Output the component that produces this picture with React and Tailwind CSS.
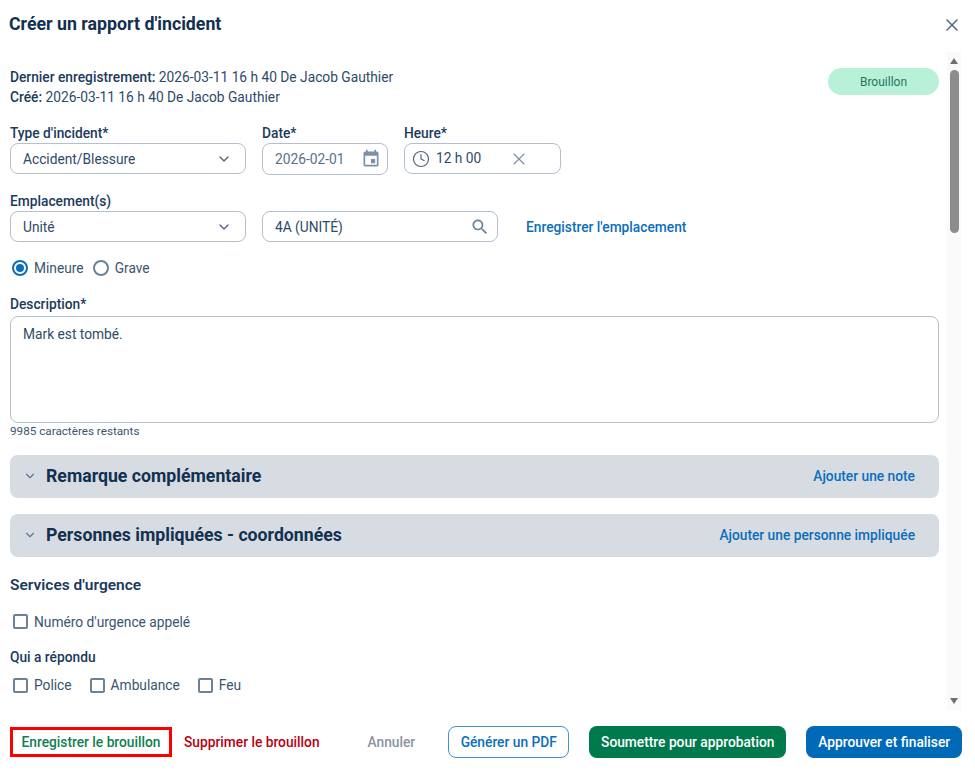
import { ChevronDown, X, Clock } from 'lucide-react';

const navy = 'text-[#12304f]';

const Label = ({ children, className = '' }) => (
  <div className={`text-[13.75px] leading-[20px] font-medium text-[#1b3a5c] ${className}`}>{children}</div>
);

const Box = ({ className = '', children }) => (
  <div className={`flex items-center rounded-[8px] border border-[#b3bfce] bg-white text-[13.75px] text-[#2f4a68] ${className}`}>
    {children}
  </div>
);

const SelectBox = ({ value }) => (
  <Box className="w-[236px] h-[31px] pl-[12px] pr-[13px] justify-between">
    <span className="pt-[1px]">{value}</span>
    <ChevronDown size={16} strokeWidth={2} className="text-[#4f6680]" />
  </Box>
);

const Check = ({ label }) => (
  <label className="flex items-center gap-[6px] text-[13.75px] text-[#3a5470]">
    <span className="w-[15px] h-[15px] ml-[3px] rounded-[2px] border-2 border-[#6d8199] bg-white" />
    {label}
  </label>
);

const Radio = ({ label, checked }) => (
  <label className="flex items-center gap-[6px] text-[13.75px] text-[#3a5470]">
    <span className={`w-[16px] h-[16px] rounded-full border-2 flex items-center justify-center ${checked ? 'border-[#0a6ebd]' : 'border-[#6d8199]'}`}>
      {checked && <span className="w-[8px] h-[8px] rounded-full bg-[#0a6ebd]" />}
    </span>
    {label}
  </label>
);

const Section = ({ title, action }) => (
  <div className="h-[43px] rounded-[8px] bg-[#d7dce3] flex items-center justify-between pl-[13px] pr-[24px]">
    <div className="flex items-center gap-[9px]">
      <ChevronDown size={14} strokeWidth={2} className="text-[#5f7690]" />
      <span className={`text-[17.7px] font-bold ${navy}`}>{title}</span>
    </div>
    <span className="text-[13.75px] font-medium text-[#0a6ebd]">{action}</span>
  </div>
);

const App = () => {
  return (
    <div className="w-[975px] h-[771px] bg-white flex flex-col overflow-hidden font-['Roboto',sans-serif]">
      {/* Header */}
      <div className="h-[52px] shrink-0 flex items-start justify-between pl-[9px] pr-[13px] pt-[12px]">
        <h1 className={`text-[17.75px] leading-[24px] font-bold ${navy}`}>Créer un rapport d'incident</h1>
        <X size={20} strokeWidth={1.8} className="text-[#4f6680] mt-[3px]" />
      </div>

      {/* Body */}
      <div className="h-[658px] shrink-0 flex">
        <div className="w-[939px] pl-[10px] shrink-0">
          <div className="flex justify-between pt-[15px] h-[71px]">
            <div className="text-[13.75px] leading-[20px] text-[#2f4a68]">
              <div><span className="font-medium text-[#1b3a5c]">Dernier enregistrement:</span> 2026-03-11 16 h 40 De Jacob Gauthier</div>
              <div><span className="font-medium text-[#1b3a5c]">Créé:</span> 2026-03-11 16 h 40 De Jacob Gauthier</div>
            </div>
            <div className="mt-[1px] w-[111px] h-[27px] rounded-full bg-[#b8f0d8] text-[#24775a] text-[12px] flex items-center justify-center">Brouillon</div>
          </div>

          <div className="flex gap-[16px]">
            <div>
              <Label>Type d'incident*</Label>
              <SelectBox value="Accident/Blessure" />
            </div>
            <div>
              <Label>Date*</Label>
              <Box className="w-[126px] h-[32px] pl-[12px] pr-[6px] justify-between text-[#5b7088]">
                <span className="pt-[1px]">2026-02-01</span>
                <svg width="20" height="20" viewBox="0 0 24 24" fill="#7d90a6">
                  <path d="M17 12h-5v5h5v-5zM16 1v2H8V1H6v2H5c-1.11 0-1.99.9-1.99 2L3 19c0 1.1.89 2 2 2h14c1.1 0 2-.9 2-2V5c0-1.1-.9-2-2-2h-1V1h-2zm3 18H5V8h14v11z" />
                </svg>
              </Box>
            </div>
            <div>
              <Label>Heure*</Label>
              <Box className="w-[157px] h-[31px] pl-[7px]">
                <Clock size={18} strokeWidth={1.6} className="text-[#4f6680] mr-[6px]" />
                <span>12 h 00</span>
                <X size={20} strokeWidth={1.4} className="text-[#7d90a6] ml-[28px]" />
              </Box>
            </div>
          </div>

          <Label className="mt-[16px]">Emplacement(s)</Label>
          <div className="flex items-center gap-[16px]">
            <SelectBox value="Unité" />
            <Box className="w-[236px] h-[31px] pl-[12px] pr-[7px] justify-between">
              <span className="pt-[1px]">4A (UNITÉ)</span>
              <svg width="20" height="20" viewBox="0 0 24 24" fill="#6d8199">
                <path d="M15.5 14h-.79l-.28-.27C15.41 12.59 16 11.11 16 9.5 16 5.91 13.09 3 9.5 3S3 5.91 3 9.5 5.91 16 9.5 16c1.61 0 3.09-.59 4.23-1.57l.27.28v.79l5 4.99L20.49 19l-4.99-5zm-6 0C7.01 14 5 11.99 5 9.5S7.01 5 9.5 5 14 7.01 14 9.5 11.99 14 9.5 14z" />
              </svg>
            </Box>
            <span className="ml-[12px] pt-[1px] text-[13.75px] font-medium text-[#0a6ebd]">Enregistrer l'emplacement</span>
          </div>

          <div className="flex gap-[9px] mt-[16px] ml-[2px]">
            <Radio label="Mineure" checked />
            <Radio label="Grave" />
          </div>

          <Label className="mt-[15px]">Description*</Label>
          <div className="mt-[2px] h-[107px] rounded-[8px] border border-[#b3bfce] px-[12px] py-[7px] text-[13.75px] text-[#2f4a68]">Mark est tombé.</div>
          <div className="text-[11.7px] leading-[16px] text-[#3a5470]">9985 caractères restants</div>

          <div className="mt-[16px] flex flex-col gap-[16px]">
            <Section title="Remarque complémentaire" action="Ajouter une note" />
            <Section title="Personnes impliquées - coordonnées" action="Ajouter une personne impliquée" />
          </div>

          <div className="mt-[18px] text-[15.5px] leading-[20px] font-semibold text-[#1b3a5c]">Services d'urgence</div>
          <div className="mt-[17px]">
            <Check label="Numéro d'urgence appelé" />
          </div>
          <Label className="mt-[15px]">Qui a répondu</Label>
          <div className="flex gap-[15px] mt-[8px]">
            <Check label="Police" />
            <Check label="Ambulance" />
            <Check label="Feu" />
          </div>
        </div>

        {/* Scrollbar */}
        <div className="ml-[8px] w-[14px] bg-[#fafafa] flex flex-col items-center pt-[6px] pb-[6px]">
          <svg width="8" height="6" viewBox="0 0 8 6" fill="#707070"><path d="M4 0l4 6H0z" /></svg>
          <div className="w-[9px] h-[163px] mt-[6px] rounded-full bg-[#8c8c8c]" />
          <div className="flex-1" />
          <svg width="8" height="6" viewBox="0 0 8 6" fill="#707070"><path d="M0 0h8L4 6z" /></svg>
        </div>
      </div>

      {/* Footer */}
      <div className="flex items-center pl-[10px] pt-[16px] text-[13.75px] font-medium">
        <div className="w-[162px] h-[30px] border-[3px] border-[#ff0000] flex items-center justify-center text-[#0f8050]">Enregistrer le brouillon</div>
        <span className="ml-[12px] text-[#b80012]">Supprimer le brouillon</span>
        <span className="ml-[48px] text-[#8a949f]">Annuler</span>
        <div className="ml-[33px] w-[121px] h-[32px] rounded-[8px] border border-[#3d93d6] flex items-center justify-center text-[#0a6ebd]">Générer un PDF</div>
        <div className="ml-[20px] w-[197px] h-[32px] rounded-[8px] bg-[#007a4d] flex items-center justify-center text-white">Soumettre pour approbation</div>
        <div className="ml-[20px] w-[156px] h-[32px] rounded-[8px] bg-[#0069b8] flex items-center justify-center text-white">Approuver et finaliser</div>
      </div>
    </div>
  );
};

export default App;
